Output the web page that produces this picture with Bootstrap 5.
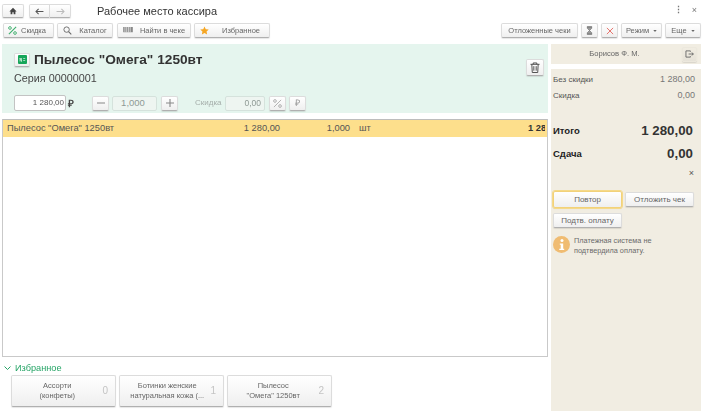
<!DOCTYPE html>
<html lang="ru"><head><meta charset="utf-8"><title>Рабочее место кассира</title>
<link href="https://cdn.jsdelivr.net/npm/bootstrap@5.3.0/dist/css/bootstrap.min.css" rel="stylesheet">
<style>
html,body{height:411px;overflow:hidden}
body{font-family:"Liberation Sans",Arial,sans-serif;font-size:9px;color:#4a4a4a;background:#fff;width:703px}
.pagewrap{height:411px;filter:blur(.35px)}
.tb{height:15px;padding:0;font-size:7.500px;line-height:1;color:#666;background:linear-gradient(#fff,#efefef);border:1px solid #dcdcdc;border-bottom-color:#b0b0b0;border-radius:2px;box-shadow:0 1px 1px rgba(0,0,0,.1);display:inline-flex;align-items:center;justify-content:center;white-space:nowrap;flex:none}
.topbar{height:23px;padding:4px 2px 0}
.titletext{font-size:11px;color:#333;margin-left:26px;line-height:14px}
.toolbar{height:21px;padding:0 2px 0 3px}
.mainrow{height:367px;padding-left:2px}
.leftcol{width:546px}
.greenp{height:69px;background:#e5f5ee;padding:7px 4px 3px 12px}
.prodtitle{font-size:13.700px;font-weight:700;color:#333;line-height:17px}
.seria{font-size:10.800px;color:#444;line-height:13px;margin-top:4px}
.numfield{height:15px;background:#eef5f1;border:1px solid #d5e2dc;border-radius:2px;display:flex;align-items:center;justify-content:flex-end;padding-right:3px;color:#8f9a95;font-size:8.500px}
.pricefield{width:52px;height:16px;background:#fff;border:1px solid #c3c3c3;border-radius:2px;color:#555;font-size:8px;display:flex;align-items:center;justify-content:flex-end;padding-right:1px}
.gridbox{height:238px;margin-top:6px;border:1px solid #c9c9c9;border-top-color:#bdbdbd;overflow:hidden;background:#fff}
.gridrow{height:17px;background:#fddf8c;color:#555;font-size:9.300px;display:flex;align-items:center;white-space:nowrap}
.gridrow>*{flex:none}
.lastcell{width:17px;overflow:hidden;font-weight:700;color:#333}
.favhead{height:18px;color:#27a567;font-size:9.200px;line-height:12px;padding-left:2px;padding-bottom:1px}
.favbtn{width:105px;height:32px;background:linear-gradient(#fff,#efefef);border:1px solid #dcdcdc;border-bottom-color:#b0b0b0;border-radius:2px;box-shadow:0 1px 1px rgba(0,0,0,.1);font-size:7.500px;line-height:10.500px;color:#666;padding:0 7px 0 8px}
.favnum{font-size:10px;color:#c4c4c4}
.rightcol{width:150px;margin-left:3px}
.righthead{height:20px;background:#f1ede2;font-size:7.600px;color:#666}
.rightp{flex:1;margin-top:5px;background:#f1ede2;padding:2px 6px 0 2px}
.sumrow{height:16px;color:#555;font-size:8px}
.sumbig{font-size:13.300px;font-weight:700;color:#333}
.sumlabel{font-size:9.500px;font-weight:700;color:#222}
.sumval{font-size:9px;color:#777}
.msg{font-size:7.300px;line-height:10px;color:#6a6a6a}
.focusb{outline:1px solid #f5d98a;border-color:#f2d27a}
.rbtn{font-size:8px;width:69px}
</style></head><body>
<div class="pagewrap">
<div class="topbar d-flex align-items-start">
 <button class="tb" style="width:22px;height:14px" aria-label="Домой"><svg width="8" height="8" viewBox="0 0 10 10"><path d="M5 1 .5 5.500H2V9h2.200V6.500h1.600V9H8V5.500h1.500z" fill="#444"/></svg></button>
 <div class="btn-group" style="margin-left:5px">
  <button class="tb" style="width:21px;height:14px;border-radius:2px 0 0 2px"><svg width="9" height="7" viewBox="0 0 10 8"><path d="M9.500 4H1.500M4 1 1 4l3 3" fill="none" stroke="#555" stroke-width="1.200"/></svg></button>
  <button class="tb" style="width:21px;height:14px;border-radius:0 2px 2px 0;border-left:0"><svg width="9" height="7" viewBox="0 0 10 8"><path d="M.5 4h8M6 1l3 3-3 3" fill="none" stroke="#bbb" stroke-width="1.200"/></svg></button>
 </div>
 <div class="titletext">Рабочее место кассира</div>
 <div class="ms-auto d-flex align-items-center" style="padding-right:4px;color:#777;font-size:9px;height:14px"><b style="margin-right:9px">⋮</b><span>×</span></div>
</div>
<div class="toolbar d-flex align-items-start">
 <button class="tb" style="width:51px;justify-content:flex-start;padding-left:4px"><svg style="margin-right:4px" width="9" height="9" viewBox="0 0 10 10"><path d="M1 9 9 1" stroke="#3cae6b" stroke-width="1.200"/><circle cx="2.200" cy="2.200" r="1.500" fill="none" stroke="#3cae6b"/><circle cx="7.800" cy="7.800" r="1.500" fill="none" stroke="#3cae6b"/></svg>Скидка</button>
 <button class="tb" style="width:56px;margin-left:3px"><svg style="margin-right:7px" width="9" height="9" viewBox="0 0 10 10"><circle cx="4" cy="4" r="3" fill="none" stroke="#666" stroke-width="1"/><path d="m6.200 6.200 3 3" stroke="#666" stroke-width="1.200"/></svg>Каталог</button>
 <button class="tb" style="width:74px;margin-left:4px"><svg style="margin-right:7px" width="10" height="7" viewBox="0 0 11 8"><path d="M0 0h11v6H0z" fill="#888"/><path d="M2 0v6M4 0v6M6 0v6M8 0v6" stroke="#fff" stroke-width=".7"/></svg>Найти в чеке</button>
 <button class="tb" style="width:76px;margin-left:3px;padding-right:4px"><svg style="margin-right:13px" width="9" height="9" viewBox="0 0 10 10"><path d="m5 .5 1.400 3 3.300.4-2.400 2.200.6 3.300L5 7.800 2.100 9.400l.6-3.300L.3 3.900l3.300-.4z" fill="#f5a623"/></svg>Избранное</button>
 <button class="tb ms-auto" style="width:77px">Отложенные чеки</button>
 <button class="tb" style="width:17px;margin-left:3px"><svg width="7" height="9" viewBox="0 0 8 10"><path d="M1 .5h6M1 9.500h6M1.500 1v1.500L4 5 1.500 7.500V9h5V7.500L4 5l2.500-2.500V1z" fill="#999" stroke="#666" stroke-width=".7"/></svg></button>
 <button class="tb" style="width:17px;margin-left:3px"><svg width="8" height="8" viewBox="0 0 9 9"><path d="m1 1 7 7M8 1 1 8" stroke="#e4645c" stroke-width="1"/></svg></button>
 <button class="tb" style="width:41px;margin-left:3px">Режим<svg class="ms-1" width="4" height="2" viewBox="0 0 5 3"><path d="M0 0h5L2.500 3z" fill="#666"/></svg></button>
 <button class="tb" style="width:36px;margin-left:3px">Еще<svg class="ms-1" width="4" height="2" viewBox="0 0 5 3"><path d="M0 0h5L2.500 3z" fill="#666"/></svg></button>
</div>
<div class="mainrow d-flex">
 <div class="leftcol d-flex flex-column">
  <div class="greenp">
   <div class="d-flex align-items-center">
    <button class="tb" style="width:16px;height:14px"><svg width="9" height="9" viewBox="0 0 9 9"><rect width="9" height="9" rx="1" fill="#17a65a"/><path d="M2 6.500V3l1.500 3.500V3M5.200 3.500h2M5.200 5.500h2" stroke="#fff" stroke-width=".6" fill="none"/></svg></button>
    <div class="prodtitle" style="margin-left:4px">Пылесос "Омега" 1250вт</div>
   </div>
   <div class="d-flex justify-content-between" style="height:28px">
    <div class="seria">Серия 00000001</div>
    <button class="tb" style="width:18px;height:17px;margin-top:-9px"><svg width="10" height="11" viewBox="0 0 11 12"><path d="M.5 2.500h10M3.500 2.500V1h4v1.500M2 2.500l.5 9h6l.5-9M4.200 4.500v5M6.800 4.500v5" fill="none" stroke="#444" stroke-width="1"/></svg></button>
   </div>
   <div class="d-flex align-items-center" style="margin-top:-1px">
    <div class="pricefield">1 280,00</div>
    <b style="margin-left:2px;width:24px;color:#444;font-size:10px">₽</b>
    <button class="tb" style="width:17px"><svg width="8" height="2" viewBox="0 0 8 2"><path d="M0 1h8" stroke="#999" stroke-width="1.200"/></svg></button>
    <div class="numfield" style="width:45px;margin-left:3px;justify-content:center;font-size:9.500px">1,000</div>
    <button class="tb" style="width:17px;margin-left:4px"><svg width="8" height="8" viewBox="0 0 8 8"><path d="M0 4h8M4 0v8" stroke="#888" stroke-width="1.100"/></svg></button>
    <span style="margin-left:17px;width:30px;font-size:8px;color:#a5aeaa">Скидка</span>
    <div class="numfield" style="width:40px">0,00</div>
    <button class="tb" style="width:17px;margin-left:4px"><svg width="9" height="9" viewBox="0 0 10 10"><path d="M1 9 9 1" stroke="#aaa"/><circle cx="2.200" cy="2.200" r="1.500" fill="none" stroke="#aaa"/><circle cx="7.800" cy="7.800" r="1.500" fill="none" stroke="#aaa"/></svg></button>
    <button class="tb" style="width:17px;margin-left:3px;color:#999;font-size:9px">₽</button>
   </div>
  </div>
  <div class="gridbox">
   <div class="gridrow">
    <span style="width:190px;padding-left:4px">Пылесос "Омега" 1250вт</span>
    <span class="text-end" style="width:87px">1 280,00</span>
    <span class="text-end" style="width:70px">1,000</span>
    <span style="margin-left:9px;width:169px">шт</span>
    <span class="lastcell">1 280,00</span>
   </div>
  </div>
  <div class="favhead d-flex align-items-end"><svg width="7" height="5" viewBox="0 0 7 5" style="margin:0 4px 3px 0"><path d="m.5 .5 3 3 3-3" fill="none" stroke="#27a567"/></svg>Избранное</div>
  <div class="d-flex" style="padding-left:9px;gap:3px">
   <div class="favbtn d-flex align-items-center"><span class="flex-fill text-center">Ассорти<br>(конфеты)</span><span class="favnum" style="margin-left:8px">0</span></div>
   <div class="favbtn d-flex align-items-center"><span class="flex-fill text-center">Ботинки женские<br>натуральная кожа (...</span><span class="favnum" style="margin-left:4px">1</span></div>
   <div class="favbtn d-flex align-items-center"><span class="flex-fill text-center">Пылесос<br>"Омега" 1250вт</span><span class="favnum" style="margin-left:8px">2</span></div>
  </div>
 </div>
 <div class="rightcol d-flex flex-column">
  <div class="righthead d-flex align-items-center">
   <span class="flex-fill text-center" style="padding-right:4px">Борисов Ф. М.</span>
   <button class="tb" style="width:15px;height:15px;margin-right:4px;background:linear-gradient(#f1ede2,#e6e2d8);border-color:#ece8dd"><svg width="9" height="8" viewBox="0 0 10 9"><path d="M6 2V1H1v7h5V7M4 4.500h5M7.500 3 9.500 4.500 7.500 6" fill="none" stroke="#666"/></svg></button>
  </div>
  <div class="rightp">
   <div class="sumrow d-flex justify-content-between align-items-center" style="margin-top:1px"><span>Без скидки</span><span class="sumval">1 280,00</span></div>
   <div class="sumrow d-flex justify-content-between align-items-center"><span>Скидка</span><span class="sumval">0,00</span></div>
   <div class="d-flex justify-content-between align-items-center" style="margin-top:17px;height:20px;padding-right:2px"><span class="sumlabel">Итого</span><span class="sumbig">1 280,00</span></div>
   <div class="d-flex justify-content-between align-items-center" style="margin-top:3px;height:20px;padding-right:2px"><span class="sumlabel">Сдача</span><span class="sumbig">0,00</span></div>
   <div class="text-end" style="height:17px;line-height:14px;margin-top:2px;color:#555;padding-right:1px">×</div>
   <div class="d-flex align-items-center" style="gap:3px;margin-top:8px">
    <button class="tb rbtn focusb" style="height:17px">Повтор</button>
    <button class="tb rbtn">Отложить чек</button>
   </div>
   <button class="tb rbtn" style="margin-top:5px">Подтв. оплату</button>
   <div class="d-flex" style="margin-top:8px;gap:4px">
    <svg width="17" height="17" viewBox="0 0 17 17" style="flex:none"><circle cx="8.500" cy="8.500" r="8.500" fill="#f0bc72"/><circle cx="9" cy="4.500" r="1.500" fill="#fff"/><path d="M6.800 7.500h3.400v5.300h1v1.200H6.300v-1.200h1.400V8.700h-.9z" fill="#fff"/></svg>
    <div class="msg">Платежная система не<br>подтвердила оплату.</div>
   </div>
  </div>
 </div>
</div>
</div>
<script src="https://cdn.jsdelivr.net/npm/bootstrap@5.3.0/dist/js/bootstrap.bundle.min.js"></script>
</body></html>
